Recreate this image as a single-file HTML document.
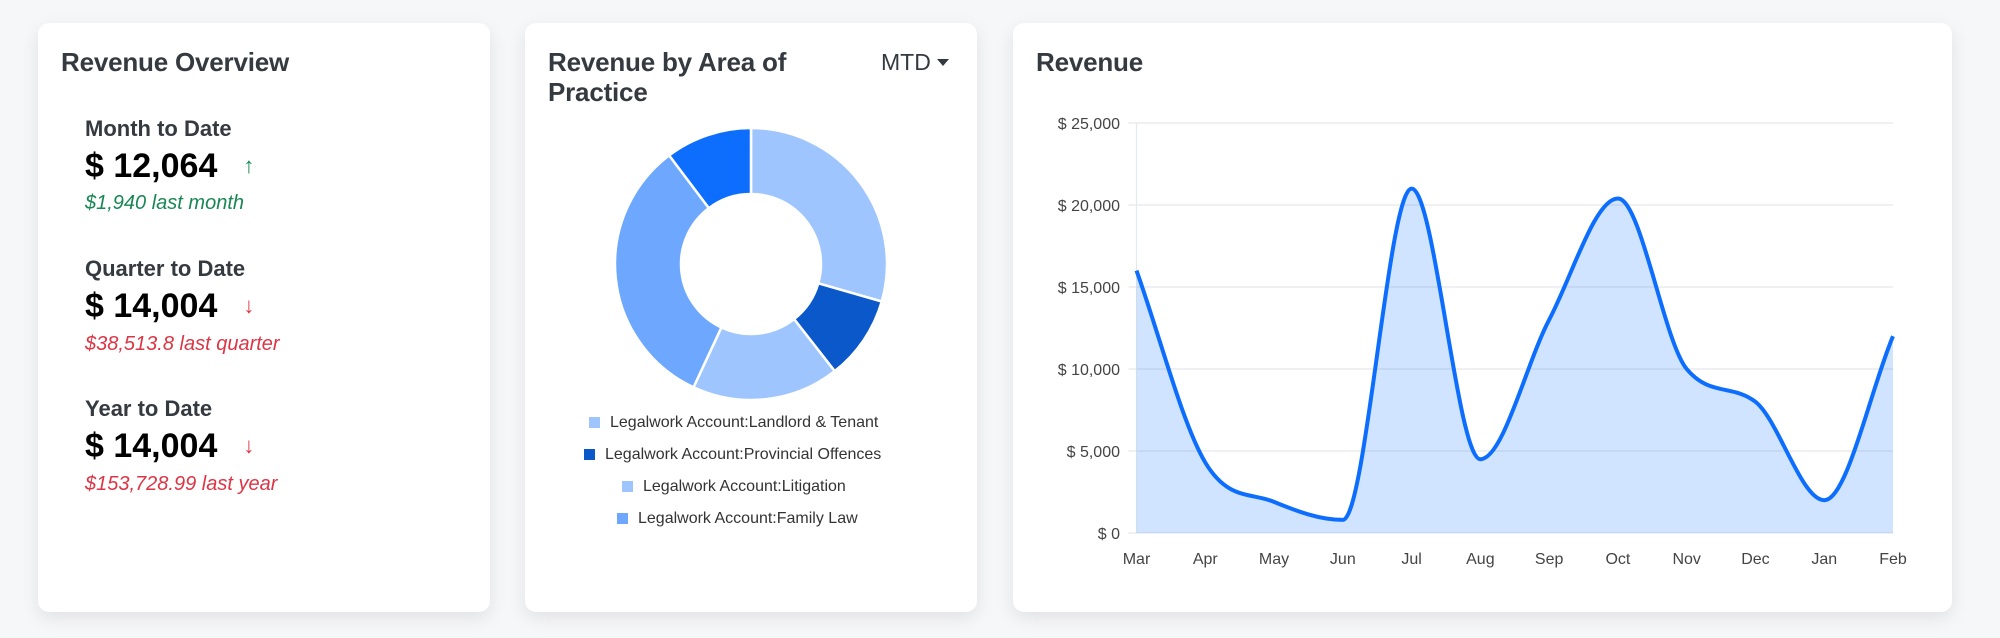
<!DOCTYPE html>
<html><head><meta charset="utf-8"><style>
*{margin:0;padding:0;box-sizing:border-box}
body{width:2000px;height:638px;background:#f6f7f9;font-family:"Liberation Sans",Arial,sans-serif;position:relative;overflow:hidden;color:#212529}
.card{position:absolute;top:23px;height:589px;background:#fff;border-radius:11px;box-shadow:0 6px 18px rgba(0,0,0,.09)}
.t{position:absolute;font-size:26px;font-weight:700;color:#343a40;letter-spacing:-0.2px}
.lbl{position:absolute;left:47px;font-size:22px;font-weight:700;color:#343a40}
.val{position:absolute;left:47px;font-size:34px;font-weight:700;color:#000}
.sub{position:absolute;left:47px;font-size:20px;font-style:italic}
.ar{font-size:22px;font-weight:400;margin-left:26px;position:relative;top:-4px}
.g{color:#198754}.r{color:#dc3545}
.leg{position:absolute;font-size:16px;color:#333;white-space:nowrap}
.leg i{display:inline-block;width:11px;height:11px;margin-right:10px;vertical-align:-1px}
.yl{position:absolute;right:0;font-size:16px;color:#444;text-align:right;width:100px}
.ml{position:absolute;font-size:16px;color:#444;transform:translateX(-50%)}
</style></head><body>
<div class="card" style="left:38px;width:452px">
  <div class="t" style="left:23px;top:24px">Revenue Overview</div>
  <div class="lbl" style="top:93px">Month to Date</div>
  <div class="val" style="top:124px">$ 12,064<span class="ar g">↑</span></div>
  <div class="sub g" style="top:169px">$1,940 last month</div>
  <div class="lbl" style="top:233px">Quarter to Date</div>
  <div class="val" style="top:264px">$ 14,004<span class="ar r">↓</span></div>
  <div class="sub r" style="top:310px">$38,513.8 last quarter</div>
  <div class="lbl" style="top:373px">Year to Date</div>
  <div class="val" style="top:404px">$ 14,004<span class="ar r">↓</span></div>
  <div class="sub r" style="top:450px">$153,728.99 last year</div>
</div>
<div class="card" style="left:525px;width:452px">
  <div class="t" style="left:23px;top:24px;line-height:30px">Revenue by Area of<br>Practice</div>
  <div style="position:absolute;left:356px;top:26px;font-size:23px;color:#343a40">MTD<span style="display:inline-block;margin-left:6px;border-left:6px solid transparent;border-right:6px solid transparent;border-top:7px solid #343a40;vertical-align:4px"></span></div>
  <svg id="donut" style="position:absolute;left:0;top:0" width="452" height="589"></svg>
  <div class="leg" style="left:64px;top:391px"><i style="background:#9ec5fe"></i>Legalwork Account:Landlord &amp; Tenant</div>
  <div class="leg" style="left:59px;top:423px"><i style="background:#0a58ca"></i>Legalwork Account:Provincial Offences</div>
  <div class="leg" style="left:97px;top:455px"><i style="background:#9ec5fe"></i>Legalwork Account:Litigation</div>
  <div class="leg" style="left:92px;top:487px"><i style="background:#6ea8fe"></i>Legalwork Account:Family Law</div>
</div>
<div class="card" style="left:1013px;width:939px">
  <div class="t" style="left:23px;top:24px">Revenue</div>
</div>
<svg id="chart" style="position:absolute;left:0;top:0" width="2000" height="638"></svg>
<div style="position:absolute;left:1020px;top:3px;width:100px;height:630px">
  <div class="yl" style="top:113px">$ 25,000</div>
  <div class="yl" style="top:195px">$ 20,000</div>
  <div class="yl" style="top:277px">$ 15,000</div>
  <div class="yl" style="top:359px">$ 10,000</div>
  <div class="yl" style="top:441px">$ 5,000</div>
  <div class="yl" style="top:523px">$ 0</div>
</div>
<div id="months"></div>
<script>
(function(){
var ns="http://www.w3.org/2000/svg";
var d=document.getElementById('donut'),cx=751-525,cy=264-23,R=136,r=70;
var segs=[[0,106,'#9ec5fe'],[106,142,'#0a58ca'],[142,205,'#9ec5fe'],[205,323,'#6ea8fe'],[323,360,'#0d6efd']];
function pt(a,rad){a=(a-90)*Math.PI/180;return [cx+rad*Math.cos(a),cy+rad*Math.sin(a)];}
segs.forEach(function(s){var a=pt(s[0],R),b=pt(s[1],R),c=pt(s[1],r),e=pt(s[0],r),l=(s[1]-s[0])>180?1:0;
var p=document.createElementNS(ns,'path');
p.setAttribute('d','M'+a+' A'+R+' '+R+' 0 '+l+' 1 '+b+' L'+c+' A'+r+' '+r+' 0 '+l+' 0 '+e+'Z');
p.setAttribute('fill',s[2]);p.setAttribute('stroke','#fff');p.setAttribute('stroke-width','2.5');d.appendChild(p);});
var c=document.getElementById('chart'),x0=1136.5,x1=1893,y0=533,k=16.4;
var h='';
for(var i=0;i<=5;i++){var y=y0-i*5*k;h+='<line x1="'+(x0-8)+'" x2="'+x1+'" y1="'+y+'" y2="'+y+'" stroke="#e6e8eb" stroke-width="1.2"/>';}
h+='<line x1="'+x0+'" x2="'+x0+'" y1="'+(y0-25*k)+'" y2="'+y0+'" stroke="#e6e8eb" stroke-width="1.2"/>';
var v=[16,4.3,1.9,0.8,21,4.5,13,20.4,10,8,2,12],n=v.length,dx=(x1-x0)/(n-1);
// monotone cubic (Fritsch-Carlson)
var del=[],m=[];
for(i=0;i<n-1;i++)del.push(v[i+1]-v[i]);
m[0]=del[0];m[n-1]=del[n-2];
for(i=1;i<n-1;i++){m[i]=(del[i-1]*del[i]<=0)?0:(del[i-1]+del[i])/2;}
for(i=0;i<n-1;i++){if(del[i]===0){m[i]=m[i+1]=0;continue;}var a=m[i]/del[i],b=m[i+1]/del[i],s=a*a+b*b;if(s>9){var tt=3/Math.sqrt(s);m[i]=tt*a*del[i];m[i+1]=tt*b*del[i];}}
function X(i){return x0+i*dx}function Y(a){return y0-a*k}
var path='M'+X(0)+','+Y(v[0]);
for(i=0;i<n-1;i++){path+=' C'+(X(i)+dx/3)+','+Y(v[i]+m[i]/3)+' '+(X(i+1)-dx/3)+','+Y(v[i+1]-m[i+1]/3)+' '+X(i+1)+','+Y(v[i+1]);}
h+='<path d="'+path+' L'+x1+','+y0+' L'+x0+','+y0+'Z" fill="rgba(13,110,253,0.19)"/>';
h+='<path d="'+path+'" fill="none" stroke="#0d6efd" stroke-width="4"/>';
c.innerHTML=h;
var ms=['Mar','Apr','May','Jun','Jul','Aug','Sep','Oct','Nov','Dec','Jan','Feb'],mh='';
ms.forEach(function(s,i){mh+='<div class="ml" style="left:'+(x0+i*dx)+'px;top:551px">'+s+'</div>';});
document.getElementById('months').innerHTML=mh;
})();
</script>
</body></html>
